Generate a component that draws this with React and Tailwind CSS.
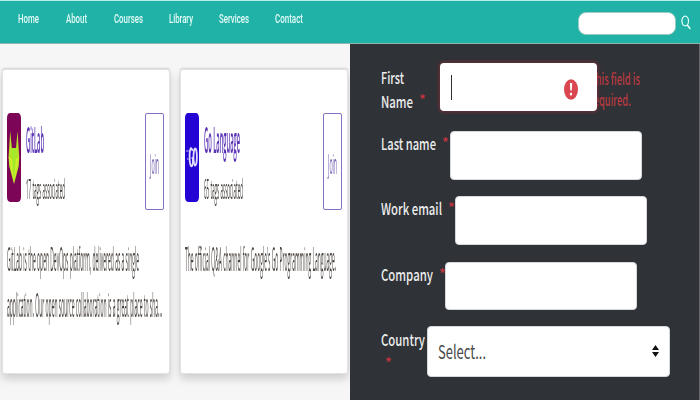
import { useLayoutEffect, useRef } from "react";

// One line of text, scaled horizontally to fill the width of its box.
function Fit({ children, className }) {
  const box = useRef(null);
  const text = useRef(null);
  useLayoutEffect(() => {
    const scale = box.current.offsetWidth / text.current.getBoundingClientRect().width;
    text.current.style.transform = `scaleX(${scale})`;
  }, []);
  return (
    <span ref={box} className={`block shrink-0 whitespace-nowrap ${className}`}>
      <span ref={text} className="inline-block origin-left align-top">
        {children}
      </span>
    </span>
  );
}

const links = [
  ["Home", "w-[21px] ml-[18px]"],
  ["About", "w-[21px] ml-[27px]"],
  ["Courses", "w-[29px] ml-[27px]"],
  ["Library", "w-[24px] ml-[26px]"],
  ["Services", "w-[30px] ml-[26px]"],
  ["Contact", "w-[28px] ml-[26px]"],
];

function Header() {
  return (
    <header className="flex h-[44px] border-t border-b border-t-[#b4efec] border-b-[#8fb5b3] bg-[#20b2a6] font-['Roboto',sans-serif]">
      <nav className="flex h-7 pt-[8px] text-[12.5px] leading-5 font-medium text-[#e4fbf8] will-change-transform">
        {links.map(([name, size]) => (
          <Fit key={name} className={size}>{name}</Fit>
        ))}
      </nav>
      <div className="ml-auto flex pt-[11px] pr-[9px]">
        <div className="h-[23px] w-[98px] rounded-[8px] border border-[#9cc9c2] bg-white" />
        <svg className="mt-[3px] ml-[5px] h-[15px] w-[10px]" viewBox="0 0 10 15" fill="none" stroke="#e8fffc" strokeWidth="1.2">
          <ellipse cx="4.2" cy="6" rx="3.3" ry="4.9" />
          <path d="M6.3 10 9.3 14" strokeWidth="1.5" />
        </svg>
      </div>
    </header>
  );
}

function GitLabMark() {
  return (
    <svg className="h-[89px] w-[14px] shrink-0" viewBox="0 0 14 89" preserveAspectRatio="none">
      <rect width="14" height="89" rx="3" ry="5" fill="#7d0558" />
      <path d="M3.2 18 1.6 44 2.2 53 7 71 11.8 53 12.2 44 10.6 18 9 35H4.9Z" fill="#b4e327" />
      <path d="M4.9 35H9L7 70Z" fill="#a3ea2c" />
      <path d="M1.6 44 4.9 46 7 70ZM12.2 44 9 46 7 70Z" fill="#cdf02a" />
    </svg>
  );
}

function GoMark() {
  return (
    <svg className="h-[89px] w-[14px] shrink-0" viewBox="0 0 14 89" preserveAspectRatio="none">
      <rect width="14" height="89" rx="3" ry="5" fill="#2404d4" />
      <path d="M1.2 38h2.4M2 46h1.4" stroke="#9d90ef" strokeWidth="1.6" />
      <g fill="none" stroke="#dedbfb" strokeWidth="1.8">
        <path d="M7.6 38C6 32 4.6 36 4.6 44s2 13 3.3 6v-5H6.6" />
        <ellipse cx="10.2" cy="44" rx="1.7" ry="8.5" />
      </g>
    </svg>
  );
}

function Card({ mark, name, nameSize, tags, lines }) {
  return (
    <article className="h-[305px] w-[168px] shrink-0 rounded-[3px] border border-[#e2e2e2] bg-white pt-[43px] pl-[4px] shadow-[0_5px_8px_rgba(0,0,0,0.17),0_-1px_2px_rgba(0,0,0,0.14)]">
      <div className="flex h-[123px]">
        {mark}
        <div className="ml-[5px] pt-[7px]">
          <Fit className={`text-[36px] leading-[40px] font-semibold text-[#5a32b4] ${nameSize}`}>{name}</Fit>
          <Fit className="mt-[12px] w-[39px] text-[28px] leading-[32px] text-[#45403e]">{tags}</Fit>
        </div>
        <button className="mr-[5px] ml-auto flex h-[97px] w-[19px] items-center justify-center rounded-[2px] border border-[#8670c5] pt-[2px] text-[28px] leading-[32px] text-[#7058ac]">
          <Fit className="w-[9px]">Join</Fit>
        </button>
      </div>
      {lines.map(([text, size]) => (
        <Fit key={text} className={`text-[32px] leading-[46px] text-[#4c4642] ${size}`}>{text}</Fit>
      ))}
    </article>
  );
}

function Star({ className }) {
  return <span className={`block shrink-0 text-[14px] leading-[16px] text-[#c2353f] ${className}`}>*</span>;
}

function Row({ label, labelSize, height, input }) {
  return (
    <div className={`flex ${height}`}>
      <Fit className={`mt-[2px] h-5 leading-5 ${labelSize}`}>{label}</Fit>
      <Star className="mt-[3px] ml-[6px] w-[5px]" />
      <div className={`shrink-0 rounded-[4px] border border-[#d5d7dc] bg-white ${input}`} />
    </div>
  );
}

function Form() {
  return (
    <form className="flex h-[356px] w-[350px] flex-col overflow-hidden border-r border-[#66686d] bg-[#2f3237] pt-[19px] pl-[31px] font-['Noto_Sans_CJK_SC',sans-serif] text-[16.4px] font-medium text-[#eceded]">
      <div className="flex h-[68px]">
        <div className="w-[38px] pt-[4px]">
          <Fit className="h-6 w-[23px] leading-[20px]">First</Fit>
          <Fit className="h-5 w-[32px] leading-[20px]">Name</Fit>
        </div>
        <Star className="mt-[28px] w-[21px]" />
        <div className="relative z-10 flex h-[48px] w-[157px] shrink-0 items-center rounded-[4px] bg-white shadow-[0_0_3px_2px_rgba(135,45,56,0.5)]">
          <span className="ml-[11px] h-[25px] w-px bg-[#303030]" />
          <svg className="mt-[4px] mr-[19px] ml-auto h-[21px] w-[14px]" viewBox="0 0 14 21">
            <ellipse cx="7" cy="10.5" rx="7" ry="10.3" fill="#d94850" />
            <path d="M5.9 4h2.3l-.4 7.6H6.3Z" fill="white" />
            <ellipse cx="7" cy="15" rx="1.2" ry="1.6" fill="white" />
          </svg>
        </div>
        <div className="-ml-[7px] pt-[5px] font-medium text-[#b83a41]">
          <Fit className="w-[50px] text-[15.5px] leading-[20px]">This field is</Fit>
          <Fit className="mt-px w-[41px] text-[15.5px] leading-[20px]">required.</Fit>
        </div>
      </div>
      <Row label="Last name" labelSize="w-[55px]" height="h-[65px]" input="h-[49px] w-[192px] ml-[3px]" />
      <Row label="Work email" labelSize="w-[61px]" height="h-[66px]" input="h-[49px] w-[192px] ml-[2px]" />
      <Row label="Company" labelSize="w-[52px]" height="h-[64px]" input="h-[48px] w-[192px] ml-[1px]" />
      <div className="flex">
        <div className="w-[46px] pt-[3px]">
          <Fit className="h-5 w-[44px] leading-[20px]">Country</Fit>
          <Star className="mt-[5px] ml-[4px]" />
        </div>
        <div className="flex h-[51px] w-[243px] shrink-0 items-center rounded-[4px] border border-[#d5d7dc] bg-white pr-[10px] pb-[2px] pl-[10px] font-normal text-[#484a4b]">
          <Fit className="w-[48px] text-[19px] leading-[24px]">Select...</Fit>
          <svg className="ml-auto h-[12px] w-[7px]" viewBox="0 0 7 12">
            <path d="M3.5 0 7 5H0ZM0 7h7l-3.5 5Z" fill="#111" />
          </svg>
        </div>
      </div>
    </form>
  );
}

export default function App() {
  return (
    <div className="h-[400px] w-[700px] overflow-hidden bg-[#f6f6f6]">
      <Header />
      <main className="flex">
        <section className="flex h-[356px] w-[350px] gap-[10px] overflow-hidden pt-[25px] pl-[2px] font-['Open_Sans',sans-serif] will-change-transform">
          <Card
            mark={<GitLabMark />}
            name="GitLab"
            nameSize="w-[18px]"
            tags="17 tags associated"
            lines={[
              ["GitLab is the open DevOps platform, delivered as a single", "w-[132px]"],
              ["application. Our open source collaboration is a great place to sha...", "w-[155px]"],
            ]}
          />
          <Card
            mark={<GoMark />}
            name="Go Language"
            nameSize="w-[36px]"
            tags="65 tags associated"
            lines={[["The official Q&A channel for Google's Go Programming Language.", "w-[151px]"]]}
          />
        </section>
        <Form />
      </main>
    </div>
  );
}
